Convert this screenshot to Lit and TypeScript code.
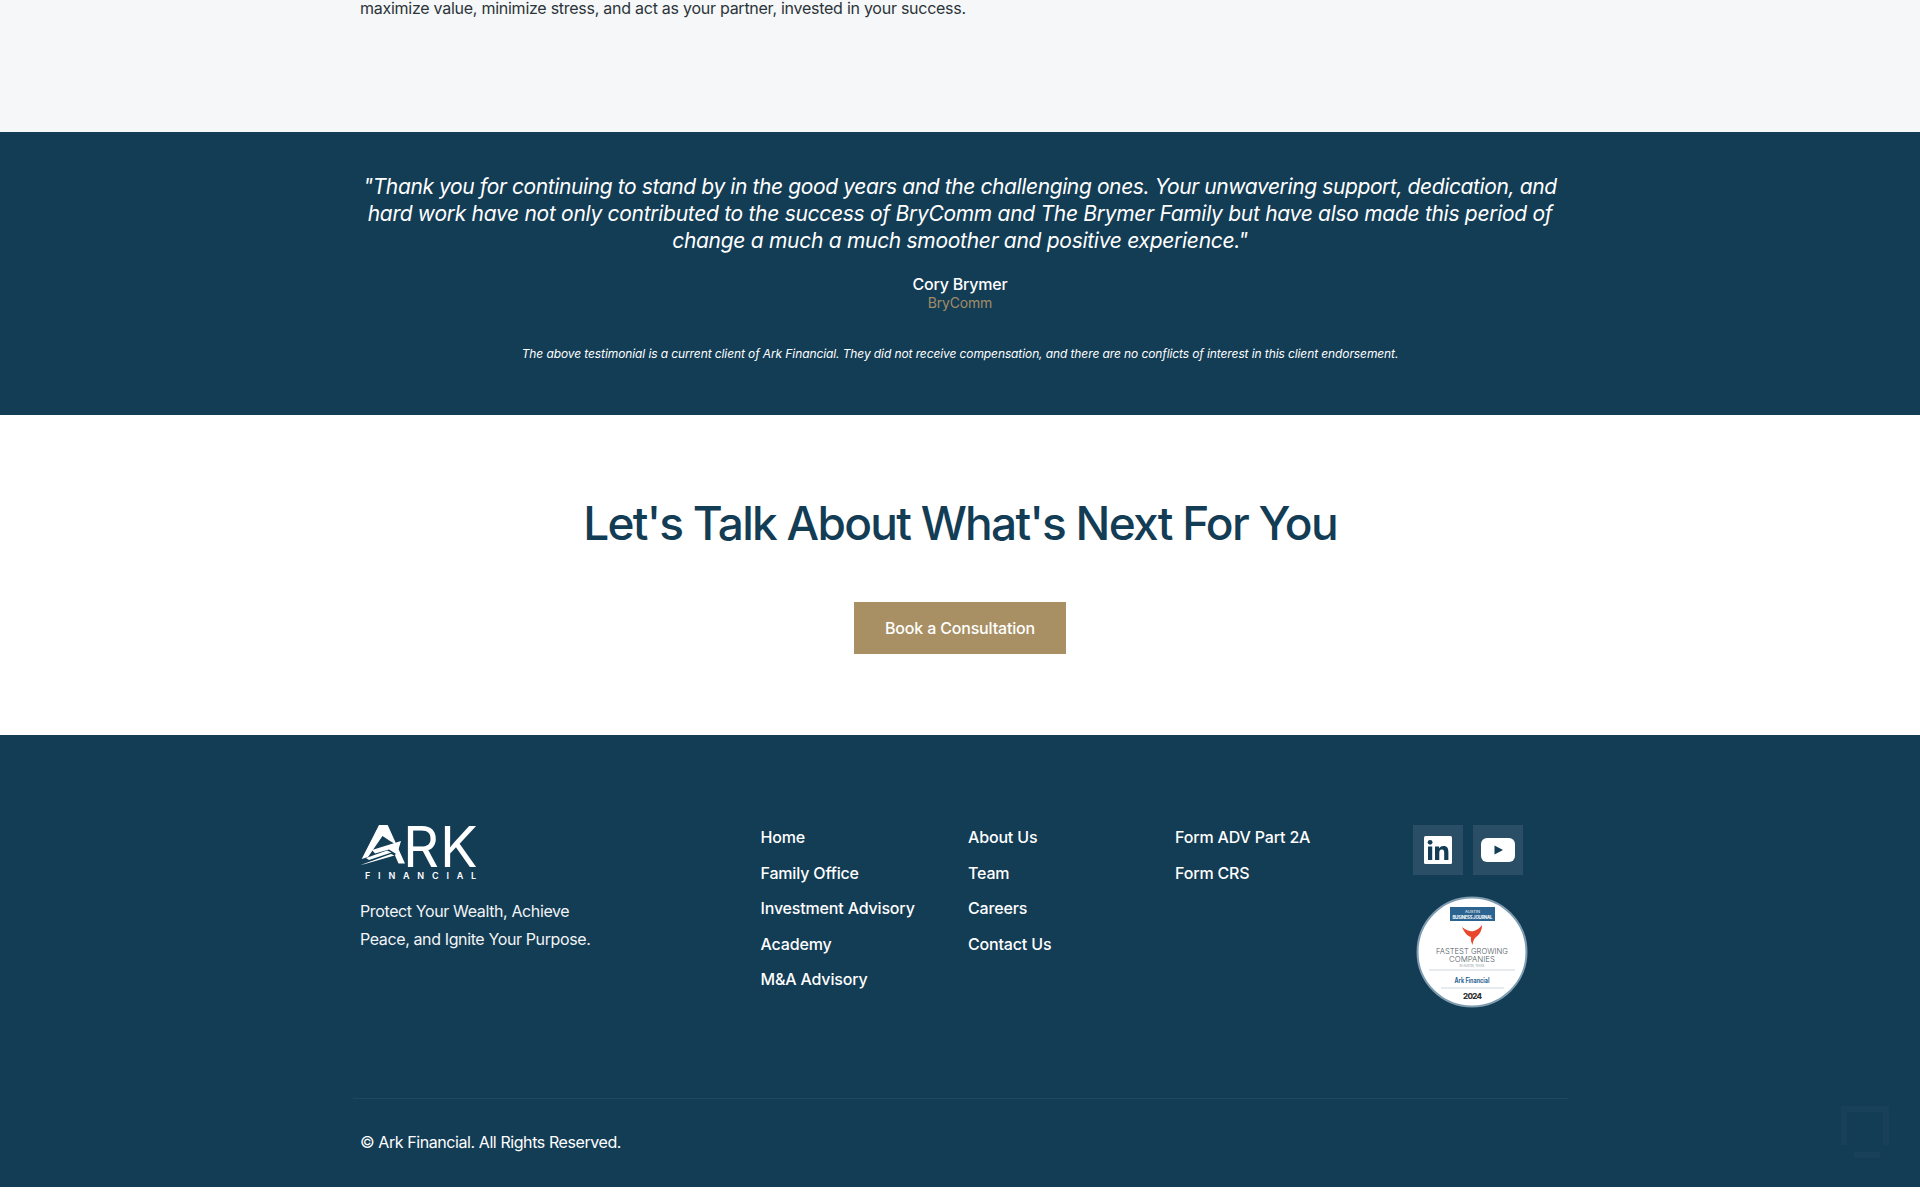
import { LitElement, html, css } from "lit";
import { customElement } from "lit/decorators.js";

const col1 = ["Home", "Family Office", "Investment Advisory", "Academy", "M&A Advisory"];
const col2 = ["About Us", "Team", "Careers", "Contact Us"];
const col3 = ["Form ADV Part 2A", "Form CRS"];

@customElement("app-root")
export class AppRoot extends LitElement {
  static styles = css`
    :host { display: block; font-family: "Inter", "Liberation Sans", sans-serif; background: #fff; height: 1202px; overflow: hidden; }
    * { box-sizing: border-box; }
    a { color: inherit; text-decoration: none; }
    p { margin: 0; }
    .intro { height: 132px; background: #f6f7f9; color: #2b3438; padding-left: 360px; font-size: 16px; line-height: 16px; letter-spacing: -0.26px; }
    .testimonial { height: 283px; background: #133c55; color: #fff; text-align: center; padding-top: 41px; display: flex; flex-direction: column; align-items: center; }
    .quote { width: 1240px; font-size: 21px; line-height: 27px; font-style: italic; letter-spacing: -0.29px; }
    .first { letter-spacing: -0.39px; }
    .name { margin-top: 20px; font-size: 16px; line-height: 20px; font-weight: 500; letter-spacing: -0.2px; }
    .company { margin-top: 0; font-size: 14px; line-height: 18px; color: #a18d68; letter-spacing: -0.2px; }
    .disclaimer { margin-top: 33px; font-size: 12px; line-height: 18px; font-style: italic; letter-spacing: -0.10px; }
    .cta { height: 320px; background: #fff; display: flex; flex-direction: column; align-items: center; padding-top: 77px; }
    h2 { margin: 0; font-size: 46px; line-height: 62px; font-weight: 500; color: #133c55; letter-spacing: -1.72px; }
    .btn { margin-top: 48px; width: 212px; height: 52px; background: #a89064; color: #fff; display: flex; align-items: center; justify-content: center; font-size: 16px; font-weight: 500; letter-spacing: -0.17px; padding-bottom: 1px; }
    footer { height: 452px; background: #133c55; color: #fff; position: relative; display: flex; flex-direction: column; }
    .main { height: 363px; padding: 89px 0 0 360px; display: flex; }
    .brand { width: 400px; }
    .logo { width: 120px; height: 56px; display: flex; flex-direction: column; }
    .logo-top { display: flex; height: 41px; }
    .logo-top svg { display: block; flex: none; }
    .rk { margin-left: -3px; font-size: 56px; line-height: 41px; height: 41px; letter-spacing: 1px; padding-top: 3px; white-space: nowrap; }
    .fin { margin: 6px 0 0 5px; font-size: 9px; line-height: 9px; font-weight: 600; letter-spacing: 7.8px; white-space: nowrap; }
    .tag { margin-top: 17px; font-size: 16px; line-height: 28px; letter-spacing: -0.38px; color: #f2f5f7; }
    .col { display: flex; flex-direction: column; gap: 15.6px; padding-top: 3px; font-size: 16px; line-height: 20px; font-weight: 500; letter-spacing: -0.17px; }
    .c1 { width: 208px; padding-left: 0.5px; } .c2 { width: 207px; } .c3 { width: 238px; }
    .side { display: flex; flex-direction: column; align-items: center; width: 116px; padding-top: 1px; }
    .social { display: flex; gap: 10px; margin-right: 6px; }
    .sq { width: 50px; height: 50px; background: #2a4e66; display: flex; align-items: center; justify-content: center; }
    .badge { margin: 21px 0 0 2px; display: block; }
    .badge text { font-family: "Inter", "Liberation Sans", sans-serif; }
    .rule { margin-left: 353px; width: 1215px; height: 1px; background: #1e4761; }
    .copy { padding: 33px 0 0 360px; font-size: 16px; line-height: 20px; letter-spacing: -0.42px; }
    .ghost { position: absolute; left: 1840px; top: 370px; opacity: 0.02; }
  `;

  render() {
    return html`
      <section class="intro"><p>maximize value, minimize stress, and act as your partner, invested in your success.</p></section>
      <section class="testimonial">
        <p class="quote"><span class="first">"Thank you for continuing to stand by in the good years and the challenging ones. Your unwavering support, dedication, and</span> hard work have not only contributed to the success of BryComm and The Brymer Family but have also made this period of change a much a much smoother and positive experience."</p>
        <p class="name">Cory Brymer</p>
        <p class="company">BryComm</p>
        <p class="disclaimer">The above testimonial is a current client of Ark Financial. They did not receive compensation, and there are no conflicts of interest in this client endorsement.</p>
      </section>
      <section class="cta">
        <h2>Let's Talk About What's Next For You</h2>
        <a class="btn" href="#">Book a Consultation</a>
      </section>
      <footer>
        <div class="main">
          <div class="brand">
            <div class="logo">
              <div class="logo-top">
                <svg width="46" height="41" viewBox="0 0 46 41" aria-hidden="true">
                  <path fill="#fff" d="M19 1H27.7L45 39.5H38.5L35 31.5 38.5 22 30 17 22.5 12 8 33 1.7 35Z"/>
                  <path fill="#fff" d="M12 26 41 17 37 30.5 29 25.5 15 29.5Z"/>
                  <path fill="#fff" d="M6 34 27 26.5 31.5 28.5 9 36Z"/>
                  <path fill="#fff" d="M0.5 41 31 30 34.5 31.5 5 40Z"/>
                </svg>
                <span class="rk">RK</span>
              </div>
              <span class="fin">FINANCIAL</span>
            </div>
            <p class="tag">Protect Your Wealth, Achieve<br />Peace, and Ignite Your Purpose.</p>
          </div>
          <nav class="col c1">${col1.map((t) => html`<a href="#">${t}</a>`)}</nav>
          <nav class="col c2">${col2.map((t) => html`<a href="#">${t}</a>`)}</nav>
          <nav class="col c3">${col3.map((t) => html`<a href="#">${t}</a>`)}</nav>
          <div class="side">
            <div class="social">
              <a class="sq" href="#" aria-label="LinkedIn">
                <svg width="28" height="28" viewBox="0 0 28 28">
                  <rect width="28" height="28" rx="1.5" fill="#fff"/>
                  <rect x="4" y="10.5" width="4.2" height="13.5" fill="#133c55"/>
                  <circle cx="6.1" cy="6.3" r="2.4" fill="#133c55"/>
                  <path fill="#133c55" d="M11 10.5h4v1.9c.7-1.2 2.2-2.3 4.4-2.3 4.2 0 5 2.7 5 6.3V24h-4.2v-6.8c0-1.7-.1-3.6-2.3-3.6s-2.6 1.7-2.6 3.5V24H11Z"/>
                </svg>
              </a>
              <a class="sq" href="#" aria-label="YouTube">
                <svg width="34" height="24" viewBox="0 0 34 24">
                  <rect width="34" height="24" rx="6" fill="#fff"/>
                  <path d="M13.5 7.5 22 12l-8.5 4.5Z" fill="#133c55"/>
                </svg>
              </a>
            </div>
            <svg class="badge" width="112" height="112" viewBox="0 0 112 112">
              <circle cx="56" cy="56" r="54.5" fill="#fff" stroke="#7f9cb0" stroke-width="2"/>
              <rect x="34" y="11" width="45" height="14" fill="#2b6391"/>
              <text x="56.5" y="16.5" font-size="4" fill="#fff" text-anchor="middle">AUSTIN</text>
              <text x="56.5" y="22.5" font-size="4.3" font-weight="700" fill="#fff" text-anchor="middle" textLength="40">BUSINESS JOURNAL</text>
              <path fill="#e8472c" d="M46 31C51 35 55 36 58 35 61 34 64 32 66 29 66 35 63 39 60 41 58 43 57 45 56.5 49 55 46 54.5 43 55 41 51 40 48 36 46 31Z"/>
              <text x="56" y="57.5" font-size="7.2" font-weight="300" fill="#4f5b63" text-anchor="middle" textLength="72" lengthAdjust="spacingAndGlyphs">FASTEST GROWING</text>
              <text x="56" y="65.5" font-size="7.2" font-weight="300" fill="#4f5b63" text-anchor="middle" textLength="46" lengthAdjust="spacingAndGlyphs">COMPANIES</text>
              <text x="56" y="70.5" font-size="2.8" fill="#8a949b" text-anchor="middle">IN AUSTIN, TEXAS</text>
              <line x1="13" y1="74" x2="99" y2="74" stroke="#bcc5cb" stroke-width="0.7"/>
              <text x="56" y="86.5" font-size="7" font-weight="700" fill="#2b6391" text-anchor="middle" textLength="35" lengthAdjust="spacingAndGlyphs">Ark Financial</text>
              <line x1="25" y1="92" x2="88" y2="92" stroke="#bcc5cb" stroke-width="0.7"/>
              <text x="56.5" y="102.5" font-size="8" font-weight="800" fill="#333" text-anchor="middle" textLength="19">2024</text>
            </svg>
          </div>
        </div>
        <div class="rule"></div>
        <p class="copy">© Ark Financial. All Rights Reserved.</p>
        <svg class="ghost" width="50" height="56" viewBox="0 0 50 56" aria-hidden="true"><path fill="none" stroke="#fff" stroke-width="6" d="M4 40V4H46V40M14 50H40"/></svg>
      </footer>
    `;
  }
}
